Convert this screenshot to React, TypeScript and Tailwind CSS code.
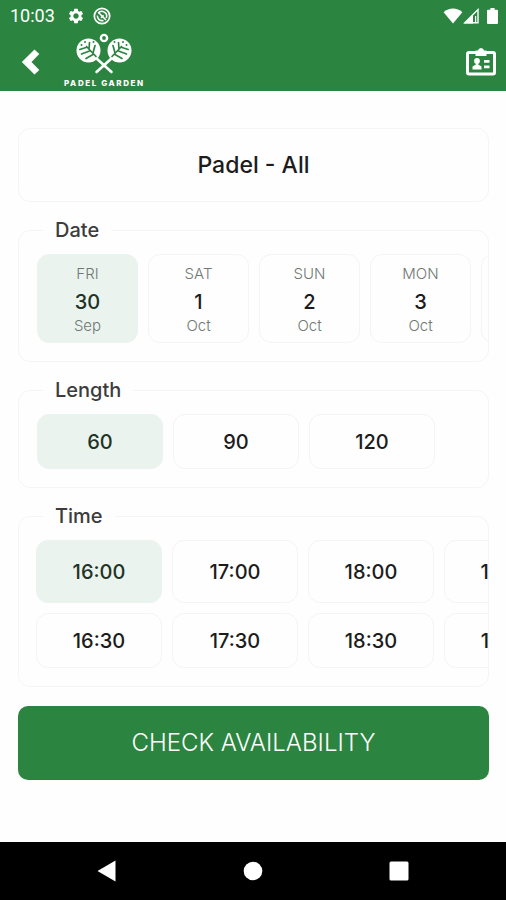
import React, { useState } from "react";
import { MdSettings } from "react-icons/md";

const dates = [
  { day: "FRI", date: "30", month: "Sep" },
  { day: "SAT", date: "1", month: "Oct" },
  { day: "SUN", date: "2", month: "Oct" },
  { day: "MON", date: "3", month: "Oct" },
  { day: "TUE", date: "4", month: "Oct" },
];

const lengths = ["60", "90", "120"];

const fullHours = ["16:00", "17:00", "18:00", "19:00"];
const halfHours = ["16:30", "17:30", "18:30", "19:30"];

const StatusBar = () => (
  <div className="flex h-8 items-center justify-between pr-2 pl-[10px] font-[Roboto,sans-serif]">
    <div className="flex items-center gap-3">
      <span className="text-lg leading-8">10:03</span>
      <MdSettings className="h-[18px] w-[18px]" />
      <svg viewBox="0 0 18 18" className="-ml-1 h-[18px] w-[18px]" fill="none" stroke="currentColor">
        <circle cx="9" cy="9" r="7.7" strokeWidth="1.7" />
        <path d="M5.2 6.2A4.7 4.7 0 0 1 13.2 11" strokeWidth="1.6" />
        <path d="M4.4 8.6A4.7 4.7 0 0 0 10.5 13.4" strokeWidth="1.6" />
        <path d="M5.5 5.5l7.5 7.5M8 10.8l2.6-2.4" strokeWidth="1.6" />
      </svg>
    </div>
    <div className="flex items-center">
      <svg viewBox="0 0 20 16" className="h-4 w-5" fill="currentColor">
        <path d="M0.6 4.2C6-0.6 14-0.6 19.4 4.2L10 15.6z" />
      </svg>
      <svg viewBox="0 0 16 16" className="h-4 w-4" fill="none" stroke="currentColor">
        <path d="M1.8 14.8H15V1.6z" strokeWidth="1.4" />
        <path d="M1 15.5L10 6.5V15.5z" fill="currentColor" stroke="none" />
        <path d="M12.6 8v7" strokeWidth="1.2" />
      </svg>
      <svg viewBox="0 0 11 16" className="ml-2 h-4 w-[11px]" fill="currentColor">
        <path d="M3.4 0h4.2v1.7H10q1 0 1 1V15q0 1-1 1H1q-1 0-1-1V2.7q0-1 1-1h2.4z" />
      </svg>
    </div>
  </div>
);

const Logo = () => (
  <div className="flex flex-col items-center">
    <svg viewBox="0 0 56 42" className="h-[42px] w-14" fill="none" strokeLinecap="round">
      <circle cx="28" cy="6" r="3.1" stroke="white" strokeWidth="2.4" />
      <path d="M20 26L35.5 40M36 26L20.5 40" stroke="white" strokeWidth="2.6" />
      <circle cx="12.5" cy="18.5" r="12" fill="white" />
      <circle cx="43.5" cy="18.5" r="12" fill="white" />
      {/* leaf veins and holes on each racket */}
      <g stroke="#2b8540" strokeWidth="1.7">
        <path d="M10.5 14.5L20 24.5M13 17L13.5 10.5M17 21L19 13.5M10 15.5L3.8 17.5M13.5 19L5.5 22M17 22.5L10 26.5" />
        <path d="M45.5 14.5L36 24.5M43 17L42.5 10.5M39 21L37 13.5M46 15.5L52.2 17.5M42.5 19L50.5 22M39 22.5L46 26.5" />
        <path d="M5.5 13v0M9 10v0M17.5 10v0M50.5 13v0M47 10v0M38.5 10v0" strokeWidth="2" />
      </g>
    </svg>
    <span className="font-[Inter,sans-serif] text-[8px] leading-[18px] font-extrabold tracking-[0.2em] whitespace-nowrap">
      PADEL GARDEN
    </span>
  </div>
);

const Header = () => (
  <header className="bg-[#2b8540] text-white">
    <StatusBar />
    <div className="flex h-[59px] items-center justify-between pr-[10px] pl-5">
      <div className="flex items-center gap-6">
        <button type="button" aria-label="Back">
          <svg viewBox="0 0 20 26" className="h-[26px] w-5" fill="currentColor">
            <path d="M14.5 0.5L19.3 5L11.5 13L19.3 21L14.5 25.5L1.8 13z" />
          </svg>
        </button>
        <Logo />
      </div>
      <button type="button" aria-label="Membership card">
        <svg viewBox="0 0 30 28" className="h-7 w-[30px]" fill="currentColor">
          <rect x="1.5" y="4.5" width="27" height="21.5" rx="1.5" fill="none" stroke="currentColor" strokeWidth="3" />
          <path d="M9.5 2.5h2.5Q12.5 0 15 0T18 2.5h2.5V8H9.5z" />
          <circle cx="11" cy="13" r="2.9" />
          <path d="M9.8 14h2.4v2.6l3.3 1.8V21.5H6.5V18.4l3.3-1.8z" />
          <path d="M18 12h5.5v2.7H18zM18 17.5h5.5v2.7H18z" />
        </svg>
      </button>
    </div>
  </header>
);

type SectionProps = { title: string; children: React.ReactNode };

const Section = ({ title, children }: SectionProps) => (
  <fieldset className="mt-[14px] min-w-0 rounded-xl border border-[#f5f5f5] pb-[18px]">
    <legend className="ml-6 px-3 text-xl leading-7 font-medium text-[#3c3c3c]">
      {title}
    </legend>
    {children}
  </fieldset>
);

type OptionProps = {
  selected: boolean;
  onClick: () => void;
  className: string;
  children: React.ReactNode;
};

const Option = ({ selected, onClick, className, children }: OptionProps) => (
  <button
    type="button"
    aria-pressed={selected}
    onClick={onClick}
    className={`shrink-0 rounded-xl border text-xl font-medium ${selected ? "border-[#ebf3ee] bg-[#ebf3ee] text-[#1f3326]" : "border-[#f4f4f4] text-[#1c1c1c]"} ${className}`}
  >
    {children}
  </button>
);

export default function App() {
  const [date, setDate] = useState("30");
  const [length, setLength] = useState("60");
  const [time, setTime] = useState("16:00");

  return (
    <div className="flex min-h-screen flex-col bg-[#fefefe] font-[Inter,sans-serif]">
      <Header />

      <main className="flex-1 pt-[37px] pr-[17px] pb-8 pl-[18px]">
        <button
          type="button"
          className="h-[74px] w-full rounded-xl border border-[#f5f5f5] text-[23px] font-medium text-[#1c1c1c]"
        >
          Padel - All
        </button>

        <Section title="Date">
          <div className="flex gap-[10px] overflow-x-auto pt-[10px] pl-[18px] [scrollbar-width:none]">
            {dates.map((item) => (
              <Option
                key={item.date}
                selected={date === item.date}
                onClick={() => setDate(item.date)}
                className="flex h-[89px] w-[101px] flex-col items-center justify-center pb-[2px]"
              >
                <span className="text-[15px] leading-6 font-light text-[#6f7872]">{item.day}</span>
                <span className="leading-8">{item.date}</span>
                <span className="text-[15px] leading-4 font-light text-[#6f7872]">{item.month}</span>
              </Option>
            ))}
          </div>
        </Section>

        <Section title="Length">
          <div className="flex gap-[10px] overflow-x-auto pt-[10px] pl-[18px] [scrollbar-width:none]">
            {lengths.map((item) => (
              <Option
                key={item}
                selected={length === item}
                onClick={() => setLength(item)}
                className="h-[55px] w-[126px]"
              >
                {item}
              </Option>
            ))}
          </div>
        </Section>

        <Section title="Time">
          <div className="flex flex-col gap-[10px] overflow-x-auto pt-[10px] pl-[17px] [scrollbar-width:none]">
            <div className="flex gap-[10px]">
              {fullHours.map((item) => (
                <Option
                  key={item}
                  selected={time === item}
                  onClick={() => setTime(item)}
                  className="h-[63px] w-[126px]"
                >
                  {item}
                </Option>
              ))}
            </div>
            <div className="flex gap-[10px]">
              {halfHours.map((item) => (
                <Option
                  key={item}
                  selected={time === item}
                  onClick={() => setTime(item)}
                  className="h-[55px] w-[126px]"
                >
                  {item}
                </Option>
              ))}
            </div>
          </div>
        </Section>

        <button
          type="button"
          className="mt-[19px] h-[74px] w-full rounded-[10px] bg-[#2b8540] text-2xl font-light text-white"
        >
          CHECK AVAILABILITY
        </button>
      </main>

      {/* Android navigation */}
      <nav className="flex h-[58px] items-center justify-around bg-black px-[34px] text-white">
        <button type="button" aria-label="System back">
          <svg viewBox="0 0 20 22" className="h-[22px] w-5" fill="currentColor">
            <path d="M18.5 0.5V21.5L0.5 11z" />
          </svg>
        </button>
        <button type="button" aria-label="Home">
          <svg viewBox="0 0 20 20" className="h-5 w-5" fill="currentColor">
            <circle cx="10" cy="10" r="9.3" />
          </svg>
        </button>
        <button type="button" aria-label="Recent apps">
          <svg viewBox="0 0 20 20" className="h-5 w-5" fill="currentColor">
            <rect x="0.5" y="0.5" width="19" height="19" rx="1.5" />
          </svg>
        </button>
      </nav>
    </div>
  );
}
